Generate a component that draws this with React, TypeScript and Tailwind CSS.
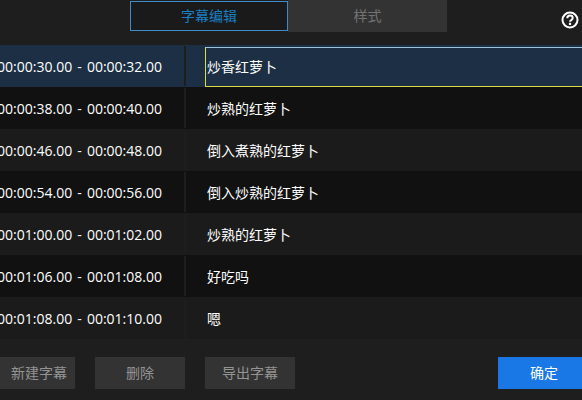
import React from 'react';

const rows = [
  { time: '00:00:30.00 - 00:00:32.00', text: '炒香红萝卜' },
  { time: '00:00:38.00 - 00:00:40.00', text: '炒熟的红萝卜' },
  { time: '00:00:46.00 - 00:00:48.00', text: '倒入煮熟的红萝卜' },
  { time: '00:00:54.00 - 00:00:56.00', text: '倒入炒熟的红萝卜' },
  { time: '00:01:00.00 - 00:01:02.00', text: '炒熟的红萝卜' },
  { time: '00:01:06.00 - 00:01:08.00', text: '好吃吗' },
  { time: '00:01:08.00 - 00:01:10.00', text: '嗯' },
];

const font = "font-['Open_Sans','Noto_Sans_CJK_SC',sans-serif]";

const HelpIcon = () => (
  <svg width="18" height="18" viewBox="0 0 18 18" fill="none">
    <circle cx="9" cy="9" r="7.5" stroke="white" strokeWidth="2" />
    <path d="M6.3 7.2C6.3 5.6 7.5 4.6 9 4.6s2.7 1 2.7 2.4c0 2.2-2.7 2-2.7 3.8" stroke="white" strokeWidth="2" />
    <rect x="7.9" y="11.8" width="2.2" height="2.2" fill="white" />
  </svg>
);

function ActionButton({ label, className = '' }: { label: string; className?: string }) {
  return (
    <button className={`flex h-8 items-center justify-center bg-[#333333] text-sm text-[#949494] ${className}`}>
      {label}
    </button>
  );
}

export default function App() {
  return (
    <div className={`flex h-[400px] w-[582px] flex-col overflow-hidden bg-[#1e1e1e] ${font}`}>
      <div className="flex h-[45px] shrink-0 items-start">
        <div className="ml-[130px] flex h-8 w-[317px] text-sm">
          <div className="mt-px flex h-[30px] w-[158px] items-center justify-center border border-[#3f8ccb] bg-[#1a1a1a] text-[#1b7fc4]">
            字幕编辑
          </div>
          <div className="flex flex-1 items-center justify-center bg-[#333333] text-[#737373]">样式</div>
        </div>
        <div className="ml-[114px] mt-[11px]">
          <HelpIcon />
        </div>
      </div>

      <div className="flex flex-col text-sm text-white">
        {rows.map((row, i) => (
          <div
            key={row.time}
            className={`flex h-[42px] ${i === 0 ? 'bg-[#1c2f45]' : i % 2 === 1 ? 'bg-[#111111]' : 'bg-[#1b1b1b]'}`}
          >
            <div className="flex w-[184px] items-center justify-end overflow-hidden whitespace-nowrap pr-[22px] pt-0.5 [word-spacing:1.5px]">
              {row.time}
            </div>
            <div className="my-px w-0.5 bg-[#1e1e1e]" />
            <div className="w-[19px]" />
            <div
              className={`flex flex-1 items-center ${
                i === 0 ? '-mr-0.5 mt-0.5 border border-[#dcdc46] border-t-[#9cc4d8] pl-px' : 'pl-0.5 pt-px'
              }`}
            >
              {row.text}
            </div>
          </div>
        ))}
      </div>

      <div className="mt-[18px] flex">
        <ActionButton label="新建字幕" className="w-[75px] pl-[3px]" />
        <ActionButton label="删除" className="ml-5 w-[90px]" />
        <ActionButton label="导出字幕" className="ml-5 w-[90px]" />
        <button className="ml-auto flex h-8 w-[84px] items-center justify-center bg-[#1a78e6] pl-[8px] text-sm text-white">
          确定
        </button>
      </div>
    </div>
  );
}
